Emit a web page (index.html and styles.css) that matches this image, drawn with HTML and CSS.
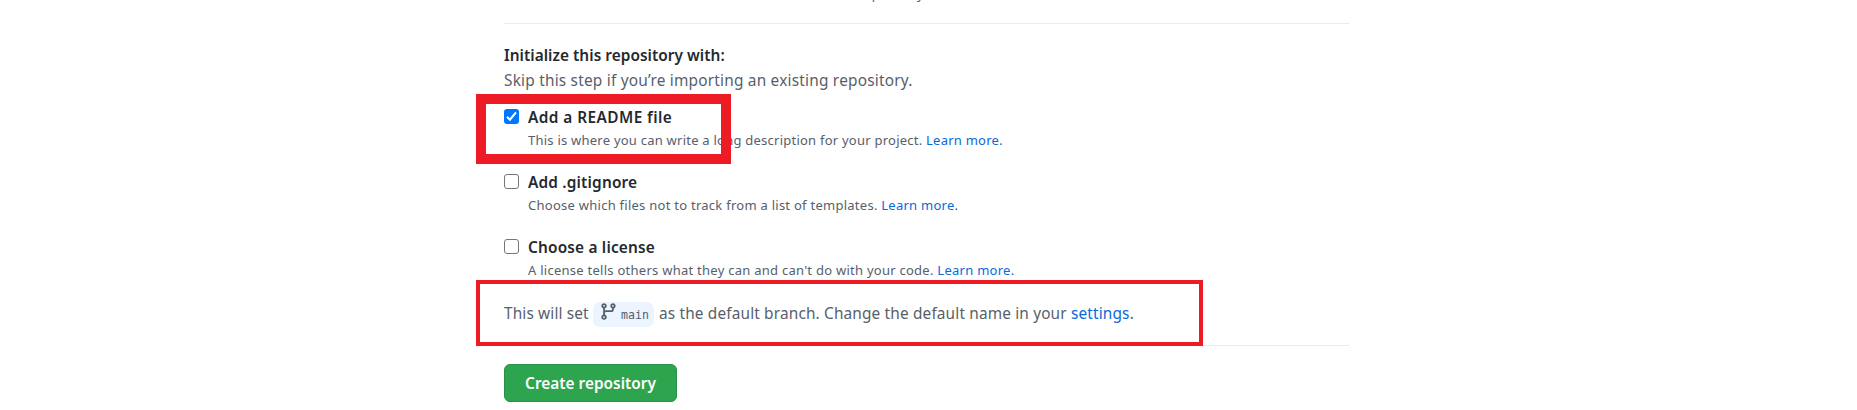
FILE: index.html
```html
<!DOCTYPE html>
<html lang="en">
<head>
<meta charset="utf-8">
<title>Create a new repository</title>
<link rel="stylesheet" href="styles.css">
</head>
<body>
<main class="form">
  <p class="note clipped">You choose who can see and commit to this repository.</p>
  <hr class="rule">
  <h2 class="heading">Initialize this repository with:</h2>
  <p class="lead">Skip this step if you’re importing an existing repository.</p>
  <div class="option readme">
    <span class="box checked"><svg viewBox="0 0 15 15" width="15" height="15"><path d="M3 7.8 5.9 10.7 12 3.3" fill="none" stroke="#fff" stroke-width="2.1"/></svg></span>
    <div class="label">Add a README file</div>
    <p class="note">This is where you can write a long description for your project. <a href="#">Learn more.</a></p>
  </div>
  <div class="option">
    <span class="box"></span>
    <div class="label">Add .gitignore</div>
    <p class="note">Choose which files not to track from a list of templates. <a href="#">Learn more.</a></p>
  </div>
  <div class="option">
    <span class="box"></span>
    <div class="label">Choose a license</div>
    <p class="note">A license tells others what they can and can't do with your code. <a href="#">Learn more.</a></p>
  </div>
  <div class="branch-line">
    <span class="before">This will set</span>
    <span class="branch"><svg viewBox="0 0 16 16" width="19" height="19"><path fill="#57606a" fill-rule="evenodd" d="M11.75 2.5a.75.75 0 100 1.5.75.75 0 000-1.5zm-2.25.75a2.25 2.25 0 113 2.122V6A2.5 2.5 0 0110 8.5H6a1 1 0 00-1 1v1.128a2.251 2.251 0 11-1.5 0V5.372a2.25 2.25 0 111.5 0v1.836A2.492 2.492 0 016 7h4a1 1 0 001-1v-.628A2.25 2.25 0 019.5 3.25zM4.25 12a.75.75 0 100 1.5.75.75 0 000-1.5zM3.5 3.25a.75.75 0 111.5 0 .75.75 0 01-1.5 0z"/></svg><code>main</code></span>
    <span class="after">as the default branch. Change the default name in your <a href="#">settings</a>.</span>
  </div>
  <hr class="rule">
  <button class="create" type="button">Create repository</button>
</main>
<div class="mark mark-readme"></div>
<div class="mark mark-branch"></div>
</body>
</html>
```
FILE: styles.css
```css
* { box-sizing: border-box; }
body {
  margin: 0;
  height: 410px;
  overflow: hidden;
  position: relative;
  background: #fff;
  color: #24292f;
  font: 15.4px/24px "Noto Sans", "Open Sans", sans-serif;
}
a { color: #0969da; text-decoration: none; }
h2, p { margin: 0; }
p, span, button { white-space: nowrap; }
.form { width: 845px; margin-left: 504px; }
.rule { height: 1px; margin: 0; border: 0; background: #e8eaec; }
.note { color: #57606a; font-size: 13px; line-height: 20px; letter-spacing: 0.26px; }
.clipped { height: 39px; margin-top: -16px; padding-left: 74px; line-height: 20px; }
.heading { height: 44px; padding-top: 20px; font-size: 15.4px; line-height: 24px; font-weight: 600; letter-spacing: 0.04px; }
.lead { height: 38px; color: #57606a; line-height: 25px; letter-spacing: 0.21px; }
.option {
  display: grid;
  grid-template-columns: 24px 1fr;
  grid-template-rows: 24px 20px;
  height: 65px;
}
.option .note { grid-column: 2; }
.box { width: 15px; height: 15px; margin-top: 3px; border: 1px solid #767676; border-radius: 3px; }
.box.checked { border: 0; background: #0075ff; }
.box svg { display: block; }
.label { font-weight: 600; letter-spacing: 0.18px; }
.readme .label { letter-spacing: 0.42px; }
.readme .note { letter-spacing: 0.235px; }
.branch-line { display: flex; align-items: flex-start; height: 44px; padding-top: 1px; color: #57606a; line-height: 24px; }
.before { width: 89px; letter-spacing: 0.13px; }
.branch { display: flex; width: 61px; height: 25px; padding-left: 6px; background: #ebf4ff; border-radius: 7px; }
.branch code { margin-left: 3px; font: 11.6px/27px "DejaVu Sans Mono", monospace; }
.after { margin-left: 5px; letter-spacing: 0.15px; }
.create {
  display: block;
  width: 173px;
  height: 38px;
  margin-top: 18px;
  padding: 2px 0 0;
  border: 1px solid #2a8f47;
  border-radius: 6px;
  background: #2da44e;
  color: #fff;
  font: 600 15.4px/24px "Noto Sans", "Open Sans", sans-serif;
}
.mark { position: absolute; border: solid #ed1c24; }
.mark-readme { left: 476px; top: 94px; width: 255px; height: 70px; border-width: 10px; }
.mark-branch { left: 476px; top: 280px; width: 727px; height: 66px; border-width: 4px; }
```
